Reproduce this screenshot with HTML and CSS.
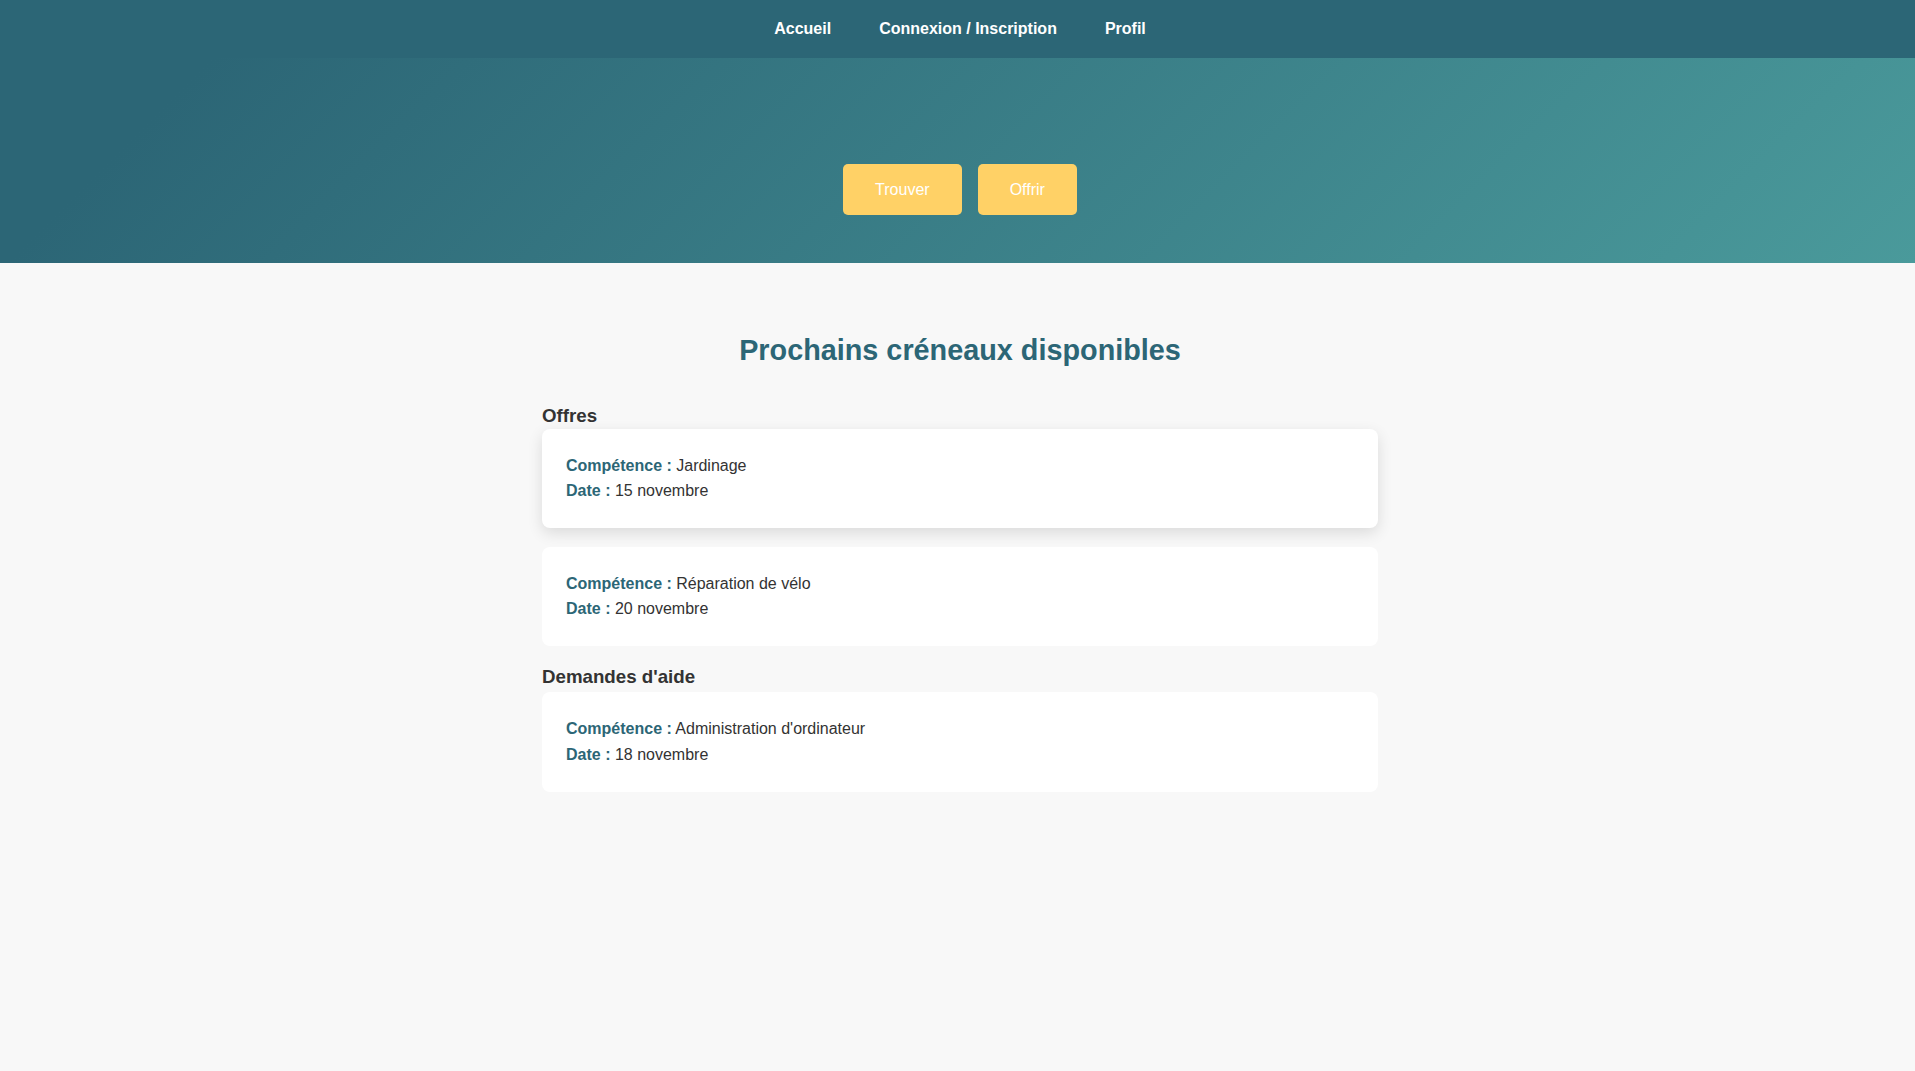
FILE: index.html
```html
<!DOCTYPE html>
<html lang="fr">
<head>
<meta charset="utf-8">
<title>Prochains créneaux</title>
<link rel="stylesheet" href="styles.css">
</head>
<body>
<header class="topbar">
  <nav class="nav">
    <a class="nav-link" href="#">Accueil</a>
    <a class="nav-link" href="#">Connexion / Inscription</a>
    <a class="nav-link" href="#">Profil</a>
  </nav>
</header>
<section class="hero">
  <div class="hero-actions">
    <a class="btn" href="#">Trouver</a>
    <a class="btn" href="#">Offrir</a>
  </div>
</section>
<main class="content">
  <h2 class="title">Prochains créneaux disponibles</h2>
  <h3 class="section-title">Offres</h3>
  <div class="card card-hover">
    <p><span class="label">Compétence :</span> Jardinage</p>
    <p><span class="label">Date :</span> 15 novembre</p>
  </div>
  <div class="card">
    <p><span class="label">Compétence :</span> Réparation de vélo</p>
    <p><span class="label">Date :</span> 20 novembre</p>
  </div>
  <h3 class="section-title">Demandes d'aide</h3>
  <div class="card">
    <p><span class="label">Compétence :</span> Administration d'ordinateur</p>
    <p><span class="label">Date :</span> 18 novembre</p>
  </div>
</main>
</body>
</html>
```
FILE: styles.css
```css
html {
  overflow-x: hidden;
}
body {
  margin: 0;
  min-width: 1920px;
  background: #f8f8f8;
  font-family: "Liberation Sans", Arial, sans-serif;
  color: #333;
  font-size: 16px;
  line-height: 1.6;
}
.topbar {
  background: #2c6676;
}
.nav {
  display: flex;
  justify-content: center;
  gap: 48px;
  padding: 16px 0;
  line-height: 26px;
}
.nav-link {
  color: #fff;
  font-weight: bold;
  text-decoration: none;
}
.hero {
  background: linear-gradient(135deg, #2c6676 10%, #4a9a9b 100%);
  padding: 106px 0 48px;
}
.hero-actions {
  display: flex;
  justify-content: center;
  gap: 16px;
}
.btn {
  display: block;
  background: #ffd166;
  color: #fff;
  text-decoration: none;
  padding: 16px 32px;
  line-height: 19px;
  border-radius: 5px;
}
.content {
  width: 836px;
  margin: 0 auto;
  padding-top: 71px;
}
.title {
  margin: 0 0 38px;
  text-align: center;
  color: #2c6676;
  font-size: 28.8px;
  line-height: normal;
}
.section-title {
  margin: 20px 0 4.5px;
  font-size: 18.72px;
  line-height: normal;
  color: #333;
}
.card {
  background: #fff;
  border-radius: 8px;
  padding: 24px;
  margin-bottom: 16px;
}
.card p {
  margin: 0;
}
.card-hover {
  transform: translateY(-3px);
  box-shadow: 0 5px 15px rgba(0, 0, 0, 0.12);
}
.label {
  color: #2c6676;
  font-weight: bold;
}
```
